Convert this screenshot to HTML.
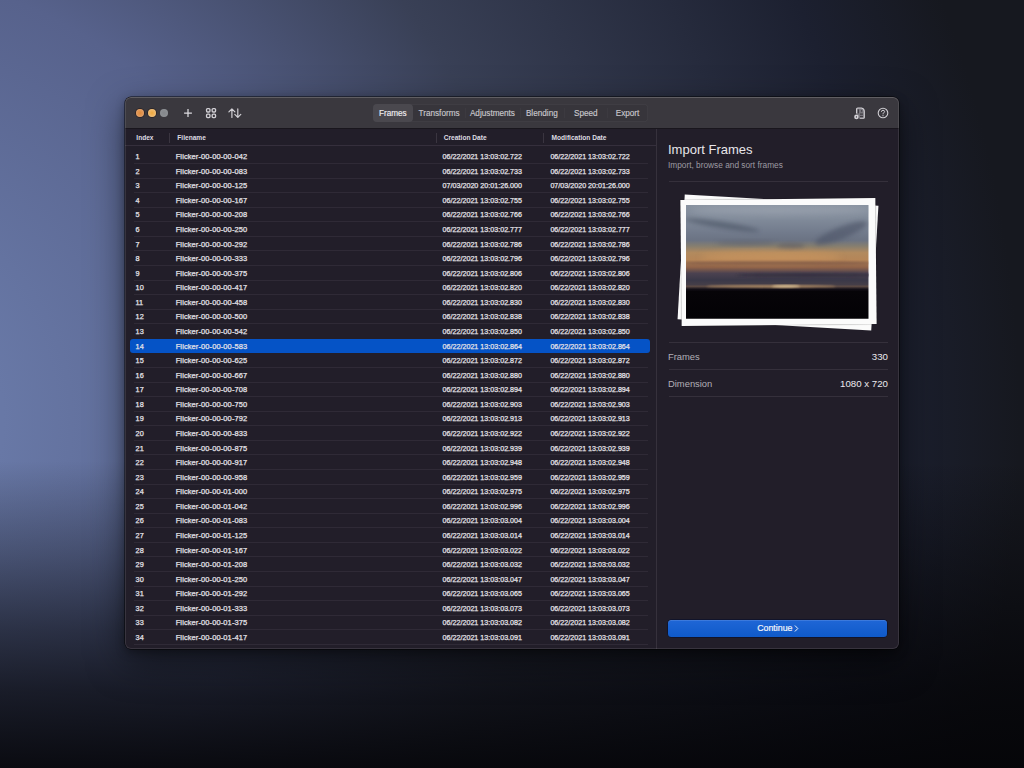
<!DOCTYPE html>
<html><head><meta charset="utf-8">
<style>
*{margin:0;padding:0;box-sizing:border-box}
html,body{width:1024px;height:768px;overflow:hidden}
body{position:relative;font-family:"Liberation Sans",sans-serif;
background:
 linear-gradient(to bottom, rgba(4,4,7,0) 0%, rgba(4,4,7,0) 60%, rgba(4,4,7,0.3) 72%, rgba(4,4,7,0.58) 82%, rgba(4,4,7,0.77) 90%, rgba(4,4,7,0.93) 100%),
 radial-gradient(ellipse 900px 900px at -150px 420px, #6d7cac 0%, #6878a6 17%, #57628c 50%, #394056 77%, #1c2030 115%, #16181f 130%);
}
.win{position:absolute;left:125px;top:97px;width:774px;height:551.5px;border-radius:6px;overflow:hidden;
 background:#221e29;
 box-shadow:0 0 0 0.5px rgba(0,0,0,0.85), 0 12px 36px rgba(0,0,0,0.5), 0 3px 10px rgba(0,0,0,0.35);}
.win:after{content:"";position:absolute;inset:0;border-radius:6px;box-shadow:inset 0 0 0 1px rgba(255,255,255,0.1), inset 0 1px 0 rgba(255,255,255,0.1);pointer-events:none}
.tb{position:absolute;left:0;top:0;width:774px;height:31.5px;background:#3a383e;border-bottom:1px solid #19161d}
.tl{position:absolute;top:12px;width:8px;height:8px;border-radius:50%}
.seg{position:absolute;left:248px;top:7.4px;width:274.7px;height:17.6px;border-radius:4px;background:#37353b;box-shadow:inset 0 0 0 0.7px rgba(255,255,255,0.06)}
.seg .sel{position:absolute;left:0;top:0;width:39.7px;height:17.6px;border-radius:4px;background:#4a484e}
.seg .d{position:absolute;top:4px;width:1px;height:9.6px;background:#3c3a40}
.seg span{position:absolute;top:0.3px;height:17.6px;line-height:17.6px;font-size:8.2px;color:#c9c7cc;-webkit-text-stroke:0.15px currentColor;text-align:center;white-space:nowrap}
.tbl{position:absolute;left:0;top:31.5px;width:531px;height:520px;background:#221e29}
.hdr{position:absolute;left:0;top:0;width:531px;height:17.2px;border-bottom:1px solid #352f3c}
.hdr span{position:absolute;top:0;line-height:18px;font-size:6.6px;font-weight:bold;color:#dedce2;white-space:nowrap}
.hdr i{position:absolute;top:4.3px;width:1px;height:10.2px;background:#3a3540}
.row{position:absolute;left:0;width:531px;height:14.57px}
.rs{position:absolute;left:8.6px;width:514.7px;height:1px;background:#2f2a36}
.row span{position:absolute;top:0;line-height:14.57px;font-size:7.3px;font-weight:normal;-webkit-text-stroke:0.25px #e4e2e8;color:#e4e2e8;white-space:nowrap}
.row.sel:before{content:"";position:absolute;left:5.1px;width:519.5px;top:-1px;height:14.5px;border-radius:3px;background:#0553c6}
.c0{left:10.6px}.c1{left:50.7px;font-size:7.5px!important;letter-spacing:0.1px}.c2{left:317.6px;font-size:7.15px!important}.c3{left:425.4px;font-size:7.15px!important}
.pnl{position:absolute;left:531px;top:31.5px;width:243px;height:520px;background:#221e29;border-left:1px solid #36313c}
.ttl{position:absolute;left:11px;top:13px;font-size:13px;line-height:16px;color:#e8e6ea;white-space:nowrap}
.sub{position:absolute;left:11px;top:31.1px;font-size:8.3px;line-height:10px;color:#9d9aa2;white-space:nowrap}
.sep{position:absolute;left:12px;width:219px;height:1px;background:#35303b}
.lbl{position:absolute;left:11px;font-size:9.4px;line-height:12px;color:#b2afb7;white-space:nowrap}
.val{position:absolute;right:11px;font-size:9.7px;line-height:12px;color:#ebe9ee;white-space:nowrap}
.btn{position:absolute;left:11.2px;top:491px;width:219.3px;height:17.2px;border-radius:3.5px;background:linear-gradient(to bottom,#1f66d6,#0f5ac9);box-shadow:0 0 0 0.7px rgba(8,16,45,0.85), inset 0 0.8px 0 rgba(120,160,230,0.45);color:#f4f6fb;font-size:8.8px;line-height:16.8px;-webkit-text-stroke:0.2px #f4f6fb;text-align:center}
.frame{position:absolute;background:#fbfbfb}
.photo{position:absolute;left:5.4px;top:5.5px;width:182.5px;height:113.7px;overflow:hidden;transform:rotate(0.6deg);
 background:
  radial-gradient(ellipse 40px 2px at 53% 72.3%, rgba(235,190,120,0.95), rgba(235,190,120,0) 100%),
  linear-gradient(to right, rgba(150,110,80,0) 0%, rgba(190,140,90,0.55) 30%, rgba(190,140,90,0.6) 70%, rgba(150,110,80,0) 100%) 0 81.6px/100% 2px no-repeat,
  radial-gradient(ellipse 70px 9px at 48% 46%, rgba(215,165,100,0.55), rgba(215,165,100,0) 100%),
  radial-gradient(ellipse 60px 5px at 25% 14%, rgba(60,68,85,0.5), rgba(60,68,85,0) 100%),
  radial-gradient(ellipse 50px 5px at 80% 22%, rgba(55,62,80,0.55), rgba(55,62,80,0) 100%),
  radial-gradient(ellipse 40px 4px at 55% 30%, rgba(60,62,78,0.5), rgba(60,62,78,0) 100%),
  radial-gradient(ellipse 80px 6px at 35% 5%, rgba(170,176,186,0.45), rgba(170,176,186,0) 100%),
  linear-gradient(to bottom, #86909f 0%, #808a99 10%, #6f7889 22%, #6a7284 31%, #86806f 36%, #b48a5c 42%, #b78656 48%, #8c6048 55%, #4a4050 60%, #3a3848 66%, #4a4048 70%, #6a5448 72%, #141018 74%, #060408 76%, #030205 100%);}
</style></head><body>
<div class="win">
 <div class="tb">
  <div class="tl" style="left:11px;background:radial-gradient(circle at 50% 50%, #df8a3a 0%, #e39a5a 55%, #e8b48f 100%);box-shadow:0 0 0 0.8px rgba(25,12,8,0.55)"></div>
  <div class="tl" style="left:23px;background:radial-gradient(circle at 50% 50%, #eea83e 0%, #f0b868 55%, #f2d0a4 100%);box-shadow:0 0 0 0.8px rgba(25,12,8,0.55)"></div>
  <div class="tl" style="left:35.4px;background:radial-gradient(circle at 50% 50%, #84878b 0%, #8c8f93 60%, #9a9da1 100%)"></div>
  <svg style="position:absolute;left:57px;top:10px" width="12" height="12" viewBox="0 0 12 12"><path d="M6 2.1V9.9M2.1 6H9.9" stroke="#dcdadf" stroke-width="1.25"/></svg>
  <svg style="position:absolute;left:80px;top:10px" width="12" height="12" viewBox="0 0 12 12" fill="none" stroke="#d2d0d5" stroke-width="1.35"><rect x="1.55" y="1.55" width="3.4" height="3.4" rx="1"/><rect x="7.15" y="1.55" width="3.4" height="3.4" rx="1"/><rect x="1.55" y="7.15" width="3.4" height="3.4" rx="1"/><rect x="7.15" y="7.15" width="3.4" height="3.4" rx="1"/></svg>
  <svg style="position:absolute;left:102px;top:9px" width="16" height="14" viewBox="0 0 16 14" fill="none" stroke="#d2d0d5" stroke-width="1.2" stroke-linecap="round" stroke-linejoin="round"><path d="M4.9 11.4V2.9M1.9 5.9L4.9 2.9L7.9 5.9M10.8 2.9V11.4M7.8 8.4L10.8 11.4L13.8 8.4"/></svg>
  <div class="seg">
   <div class="sel"></div>
   <div class="d" style="left:92.4px"></div><div class="d" style="left:146.5px"></div><div class="d" style="left:191.2px"></div><div class="d" style="left:234.4px"></div>
   <span style="left:0;width:39.7px;color:#f0eef2">Frames</span>
   <span style="left:39.7px;width:52.7px">Transforms</span>
   <span style="left:92.4px;width:54.1px">Adjustments</span>
   <span style="left:146.5px;width:44.7px">Blending</span>
   <span style="left:191.2px;width:43.2px">Speed</span>
   <span style="left:234.4px;width:40.3px">Export</span>
  </div>
  <svg style="position:absolute;left:727px;top:8.5px" width="15" height="15" viewBox="0 0 15 15">
<path d="M4.6 7.6V3.2Q4.6 2 5.8 2H9.5Q12.3 2.4 12.3 5.5V11.6Q12.3 12.3 11.6 12.3H7.6" fill="#77757c" stroke="#d4d2d7" stroke-width="1.1"/>
<path d="M6.3 3.4V7.4" stroke="#2c2a30" stroke-width="1"/>
<circle cx="9.6" cy="4.9" r="0.7" fill="#2c2a30"/>
<path d="M8 8.1H11M8 10.7H11" stroke="#2c2a30" stroke-width="0.9"/>
<circle cx="4.45" cy="10.9" r="2.3" fill="#d4d2d7"/>
<circle cx="4.45" cy="10.9" r="0.65" fill="#2c2a30"/>
</svg>
  <svg style="position:absolute;left:750.6px;top:9px" width="14" height="14" viewBox="0 0 14 14" fill="none" stroke="#d0ced3" stroke-width="1.1"><circle cx="7" cy="7" r="4.8"/><path d="M5.4 5.8Q5.4 4.3 7 4.3Q8.6 4.3 8.6 5.6Q8.6 6.5 7.6 6.9Q7 7.2 7 8V8.3" stroke-width="1"/><circle cx="7" cy="9.7" r="0.6" fill="#d0ced3" stroke="none"/></svg>
 </div>
 <div class="tbl">
  <div class="hdr">
   <span style="left:11.3px">Index</span>
   <i style="left:43.9px"></i>
   <span style="left:52.3px">Filename</span>
   <i style="left:311.4px"></i>
   <span style="left:318.7px">Creation Date</span>
   <i style="left:418.4px"></i>
   <span style="left:426.5px">Modification Date</span>
  </div>
<div class="row" style="top:21.70px"><span class="c0">1</span><span class="c1">Flicker-00-00-00-042</span><span class="c2">06/22/2021 13:03:02.722</span><span class="c3">06/22/2021 13:03:02.722</span></div>
<div class="row" style="top:36.27px"><span class="c0">2</span><span class="c1">Flicker-00-00-00-083</span><span class="c2">06/22/2021 13:03:02.733</span><span class="c3">06/22/2021 13:03:02.733</span></div>
<div class="row" style="top:50.84px"><span class="c0">3</span><span class="c1">Flicker-00-00-00-125</span><span class="c2">07/03/2020 20:01:26.000</span><span class="c3">07/03/2020 20:01:26.000</span></div>
<div class="row" style="top:65.41px"><span class="c0">4</span><span class="c1">Flicker-00-00-00-167</span><span class="c2">06/22/2021 13:03:02.755</span><span class="c3">06/22/2021 13:03:02.755</span></div>
<div class="row" style="top:79.98px"><span class="c0">5</span><span class="c1">Flicker-00-00-00-208</span><span class="c2">06/22/2021 13:03:02.766</span><span class="c3">06/22/2021 13:03:02.766</span></div>
<div class="row" style="top:94.55px"><span class="c0">6</span><span class="c1">Flicker-00-00-00-250</span><span class="c2">06/22/2021 13:03:02.777</span><span class="c3">06/22/2021 13:03:02.777</span></div>
<div class="row" style="top:109.12px"><span class="c0">7</span><span class="c1">Flicker-00-00-00-292</span><span class="c2">06/22/2021 13:03:02.786</span><span class="c3">06/22/2021 13:03:02.786</span></div>
<div class="row" style="top:123.69px"><span class="c0">8</span><span class="c1">Flicker-00-00-00-333</span><span class="c2">06/22/2021 13:03:02.796</span><span class="c3">06/22/2021 13:03:02.796</span></div>
<div class="row" style="top:138.26px"><span class="c0">9</span><span class="c1">Flicker-00-00-00-375</span><span class="c2">06/22/2021 13:03:02.806</span><span class="c3">06/22/2021 13:03:02.806</span></div>
<div class="row" style="top:152.83px"><span class="c0">10</span><span class="c1">Flicker-00-00-00-417</span><span class="c2">06/22/2021 13:03:02.820</span><span class="c3">06/22/2021 13:03:02.820</span></div>
<div class="row" style="top:167.40px"><span class="c0">11</span><span class="c1">Flicker-00-00-00-458</span><span class="c2">06/22/2021 13:03:02.830</span><span class="c3">06/22/2021 13:03:02.830</span></div>
<div class="row" style="top:181.97px"><span class="c0">12</span><span class="c1">Flicker-00-00-00-500</span><span class="c2">06/22/2021 13:03:02.838</span><span class="c3">06/22/2021 13:03:02.838</span></div>
<div class="row" style="top:196.54px"><span class="c0">13</span><span class="c1">Flicker-00-00-00-542</span><span class="c2">06/22/2021 13:03:02.850</span><span class="c3">06/22/2021 13:03:02.850</span></div>
<div class="row sel" style="top:211.11px"><span class="c0">14</span><span class="c1">Flicker-00-00-00-583</span><span class="c2">06/22/2021 13:03:02.864</span><span class="c3">06/22/2021 13:03:02.864</span></div>
<div class="row" style="top:225.68px"><span class="c0">15</span><span class="c1">Flicker-00-00-00-625</span><span class="c2">06/22/2021 13:03:02.872</span><span class="c3">06/22/2021 13:03:02.872</span></div>
<div class="row" style="top:240.25px"><span class="c0">16</span><span class="c1">Flicker-00-00-00-667</span><span class="c2">06/22/2021 13:03:02.880</span><span class="c3">06/22/2021 13:03:02.880</span></div>
<div class="row" style="top:254.82px"><span class="c0">17</span><span class="c1">Flicker-00-00-00-708</span><span class="c2">06/22/2021 13:03:02.894</span><span class="c3">06/22/2021 13:03:02.894</span></div>
<div class="row" style="top:269.39px"><span class="c0">18</span><span class="c1">Flicker-00-00-00-750</span><span class="c2">06/22/2021 13:03:02.903</span><span class="c3">06/22/2021 13:03:02.903</span></div>
<div class="row" style="top:283.96px"><span class="c0">19</span><span class="c1">Flicker-00-00-00-792</span><span class="c2">06/22/2021 13:03:02.913</span><span class="c3">06/22/2021 13:03:02.913</span></div>
<div class="row" style="top:298.53px"><span class="c0">20</span><span class="c1">Flicker-00-00-00-833</span><span class="c2">06/22/2021 13:03:02.922</span><span class="c3">06/22/2021 13:03:02.922</span></div>
<div class="row" style="top:313.10px"><span class="c0">21</span><span class="c1">Flicker-00-00-00-875</span><span class="c2">06/22/2021 13:03:02.939</span><span class="c3">06/22/2021 13:03:02.939</span></div>
<div class="row" style="top:327.67px"><span class="c0">22</span><span class="c1">Flicker-00-00-00-917</span><span class="c2">06/22/2021 13:03:02.948</span><span class="c3">06/22/2021 13:03:02.948</span></div>
<div class="row" style="top:342.24px"><span class="c0">23</span><span class="c1">Flicker-00-00-00-958</span><span class="c2">06/22/2021 13:03:02.959</span><span class="c3">06/22/2021 13:03:02.959</span></div>
<div class="row" style="top:356.81px"><span class="c0">24</span><span class="c1">Flicker-00-00-01-000</span><span class="c2">06/22/2021 13:03:02.975</span><span class="c3">06/22/2021 13:03:02.975</span></div>
<div class="row" style="top:371.38px"><span class="c0">25</span><span class="c1">Flicker-00-00-01-042</span><span class="c2">06/22/2021 13:03:02.996</span><span class="c3">06/22/2021 13:03:02.996</span></div>
<div class="row" style="top:385.95px"><span class="c0">26</span><span class="c1">Flicker-00-00-01-083</span><span class="c2">06/22/2021 13:03:03.004</span><span class="c3">06/22/2021 13:03:03.004</span></div>
<div class="row" style="top:400.52px"><span class="c0">27</span><span class="c1">Flicker-00-00-01-125</span><span class="c2">06/22/2021 13:03:03.014</span><span class="c3">06/22/2021 13:03:03.014</span></div>
<div class="row" style="top:415.09px"><span class="c0">28</span><span class="c1">Flicker-00-00-01-167</span><span class="c2">06/22/2021 13:03:03.022</span><span class="c3">06/22/2021 13:03:03.022</span></div>
<div class="row" style="top:429.66px"><span class="c0">29</span><span class="c1">Flicker-00-00-01-208</span><span class="c2">06/22/2021 13:03:03.032</span><span class="c3">06/22/2021 13:03:03.032</span></div>
<div class="row" style="top:444.23px"><span class="c0">30</span><span class="c1">Flicker-00-00-01-250</span><span class="c2">06/22/2021 13:03:03.047</span><span class="c3">06/22/2021 13:03:03.047</span></div>
<div class="row" style="top:458.80px"><span class="c0">31</span><span class="c1">Flicker-00-00-01-292</span><span class="c2">06/22/2021 13:03:03.065</span><span class="c3">06/22/2021 13:03:03.065</span></div>
<div class="row" style="top:473.37px"><span class="c0">32</span><span class="c1">Flicker-00-00-01-333</span><span class="c2">06/22/2021 13:03:03.073</span><span class="c3">06/22/2021 13:03:03.073</span></div>
<div class="row" style="top:487.94px"><span class="c0">33</span><span class="c1">Flicker-00-00-01-375</span><span class="c2">06/22/2021 13:03:03.082</span><span class="c3">06/22/2021 13:03:03.082</span></div>
<div class="row" style="top:502.51px"><span class="c0">34</span><span class="c1">Flicker-00-00-01-417</span><span class="c2">06/22/2021 13:03:03.091</span><span class="c3">06/22/2021 13:03:03.091</span></div>
<div class="rs" style="top:34.5px"></div>
<div class="rs" style="top:49.5px"></div>
<div class="rs" style="top:63.5px"></div>
<div class="rs" style="top:78.5px"></div>
<div class="rs" style="top:92.5px"></div>
<div class="rs" style="top:107.5px"></div>
<div class="rs" style="top:121.5px"></div>
<div class="rs" style="top:136.5px"></div>
<div class="rs" style="top:151.5px"></div>
<div class="rs" style="top:165.5px"></div>
<div class="rs" style="top:180.5px"></div>
<div class="rs" style="top:194.5px"></div>
<div class="rs" style="top:238.5px"></div>
<div class="rs" style="top:253.5px"></div>
<div class="rs" style="top:267.5px"></div>
<div class="rs" style="top:282.5px"></div>
<div class="rs" style="top:296.5px"></div>
<div class="rs" style="top:311.5px"></div>
<div class="rs" style="top:325.5px"></div>
<div class="rs" style="top:340.5px"></div>
<div class="rs" style="top:355.5px"></div>
<div class="rs" style="top:369.5px"></div>
<div class="rs" style="top:384.5px"></div>
<div class="rs" style="top:398.5px"></div>
<div class="rs" style="top:413.5px"></div>
<div class="rs" style="top:427.5px"></div>
<div class="rs" style="top:442.5px"></div>
<div class="rs" style="top:457.5px"></div>
<div class="rs" style="top:471.5px"></div>
<div class="rs" style="top:486.5px"></div>
<div class="rs" style="top:500.5px"></div>
<div class="rs" style="top:515.5px"></div>
 </div>
 <div class="pnl">
  <div class="ttl">Import Frames</div>
  <div class="sub">Import, browse and sort frames</div>
  <div class="sep" style="top:52.5px"></div>
  <div class="frame" style="left:23.5px;top:71px;width:193.7px;height:124.7px;transform:rotate(3.3deg)"></div>
  <div class="frame" style="left:23.7px;top:70.7px;width:195px;height:125.5px;transform:rotate(-0.6deg);box-shadow:0 0 1px rgba(0,0,0,0.6)"><div class="photo" style="background:none"><svg width="182.5" height="113.7" viewBox="0 0 182.5 113.7" style="display:block">
<defs>
<linearGradient id="sky" x1="0" y1="0" x2="0" y2="1">
<stop offset="0" stop-color="#87919f"/><stop offset="0.12" stop-color="#818b9a"/><stop offset="0.24" stop-color="#727b8c"/><stop offset="0.31" stop-color="#6b7383"/>
<stop offset="0.36" stop-color="#857e70"/><stop offset="0.42" stop-color="#b28a5e"/><stop offset="0.48" stop-color="#b58658"/><stop offset="0.55" stop-color="#8e6249"/>
<stop offset="0.60" stop-color="#4c4250"/><stop offset="0.66" stop-color="#3a3848"/><stop offset="0.70" stop-color="#453e48"/><stop offset="0.715" stop-color="#5e4c46"/>
<stop offset="0.74" stop-color="#141018"/><stop offset="0.76" stop-color="#060408"/><stop offset="1" stop-color="#030205"/>
</linearGradient>
<filter id="b2" x="-50%" y="-50%" width="200%" height="200%"><feGaussianBlur stdDeviation="2"/></filter>
<filter id="b1" x="-50%" y="-50%" width="200%" height="200%"><feGaussianBlur stdDeviation="1"/></filter>
<filter id="b3" x="-50%" y="-50%" width="200%" height="200%"><feGaussianBlur stdDeviation="3"/></filter>
</defs>
<rect width="182.5" height="113.7" fill="url(#sky)"/>
<ellipse cx="95" cy="5" rx="90" ry="5" fill="#a8afba" opacity="0.45" filter="url(#b3)"/>
<ellipse cx="36" cy="20" rx="38" ry="3.2" fill="#4a5264" opacity="0.6" transform="rotate(9 36 20)" filter="url(#b2)"/>
<ellipse cx="155" cy="28" rx="28" ry="6" fill="#4c5366" opacity="0.6" transform="rotate(-22 155 28)" filter="url(#b2)"/>
<ellipse cx="105" cy="41" rx="14" ry="3" fill="#4a4c5c" opacity="0.4" filter="url(#b2)"/>
<ellipse cx="60" cy="38" rx="30" ry="2.5" fill="#5a5e6c" opacity="0.5" filter="url(#b2)"/>
<ellipse cx="85" cy="52" rx="70" ry="6" fill="#d09a60" opacity="0.5" filter="url(#b3)"/>
<ellipse cx="91" cy="58" rx="95" ry="1.8" fill="#6e4c42" opacity="0.55" filter="url(#b1)"/>
<ellipse cx="120" cy="70" rx="70" ry="2" fill="#2e2c3a" opacity="0.6" filter="url(#b1)"/>
<ellipse cx="85" cy="81.3" rx="65" ry="1.1" fill="#c8a070" opacity="0.85" filter="url(#b1)"/>
<ellipse cx="100" cy="81.3" rx="14" ry="1" fill="#f0d8a8" opacity="0.9" filter="url(#b1)"/>
</svg></div></div>
  <div class="sep" style="top:213.2px"></div>
  <div class="lbl" style="top:222.3px">Frames</div><div class="val" style="top:222.3px">330</div>
  <div class="sep" style="top:240.4px"></div>
  <div class="lbl" style="top:249.2px">Dimension</div><div class="val" style="top:249.2px">1080 x 720</div>
  <div class="sep" style="top:267.5px"></div>
  <div class="btn"><span style="position:relative;left:-3px">Continue</span><svg style="position:absolute;left:125.5px;top:5px" width="5" height="7" viewBox="0 0 5 7" fill="none" stroke="#f4f6fb" stroke-width="1" stroke-linecap="round" stroke-linejoin="round"><path d="M1.2 0.8L3.8 3.5L1.2 6.2"/></svg></div>
 </div>
</div>
</body></html>
